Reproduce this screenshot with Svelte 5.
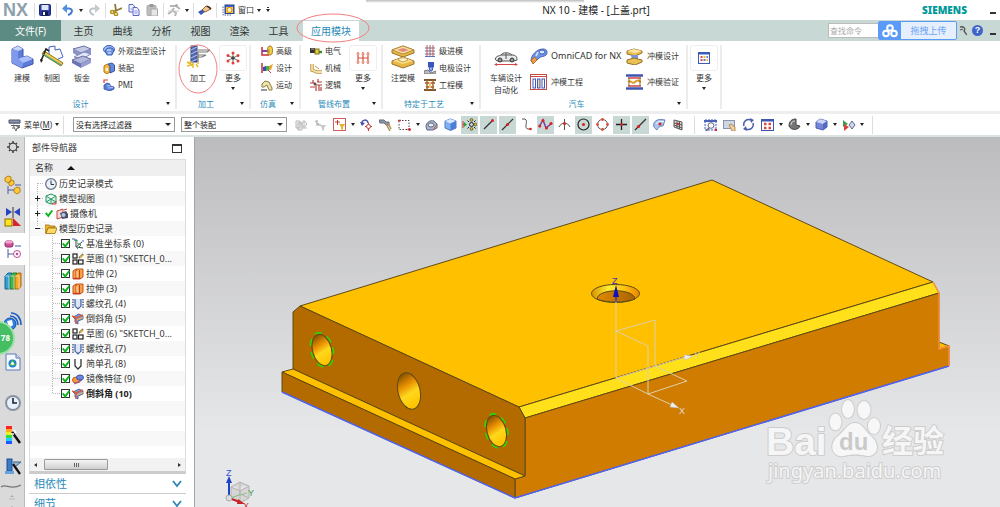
<script>
  const icons = {
    save: [12, 12, '<rect x=".5" y=".5" width="11" height="11" rx="1" fill="#2b3da0" stroke="#1c2a78"/><rect x="2.500" y="1" width="7" height="5" fill="#dfe6fa"/><rect x="3" y="7.500" width="6" height="4" fill="#11184a"/><rect x="4" y="8" width="2" height="3" fill="#fff"/>'],
    undo: [12, 12, '<path d="M2.500 4.500H7C12 5 10 10 6 11" fill="none" stroke="#3f7fd0" stroke-width="2"/><path d="M0 4.500L5 0V9Z" fill="#4f8fdc"/>'],
    redo: [12, 12, '<path d="M9.500 4.500H5C0 5 2 10 6 11" fill="none" stroke="#bcc4cc" stroke-width="2"/><path d="M12 4.500L7 0V9Z" fill="#c3cad2"/>'],
    cut: [12, 12, '<path d="M5 0L6 7M12 4L3 8" stroke="#8c7a3a" stroke-width="1.800"/><ellipse cx="2.500" cy="8" rx="2" ry="1.500" fill="none" stroke="#b3921e" stroke-width="1.500"/><ellipse cx="6" cy="10" rx="1.500" ry="1.800" fill="none" stroke="#b3921e" stroke-width="1.500"/>'],
    copy: [12, 12, '<path d="M1 .500H5L7 3V8H1Z" fill="#eef0ff" stroke="#5a68c4"/><path d="M5 3.500H9L11 6V11.500H5Z" fill="#eef0ff" stroke="#5a68c4"/><path d="M6.500 7H9.500M6.500 9H9.500M2.500 5H4" stroke="#8b95dd"/>'],
    paste: [12, 12, '<rect x="1" y="1.500" width="9" height="10" rx="1" fill="#bdbdbd" stroke="#aaa"/><rect x="3.500" y="0" width="4" height="3" fill="#999"/><rect x="5" y="5" width="6.500" height="7" fill="#e6e6e6" stroke="#aaa"/>'],
    runner: [14, 12, '<path d="M3 2H9L13 5M7 4L4 8L1 10M6 7L9 9L8 12" fill="none" stroke="#b5b5b5" stroke-width="2"/><circle cx="9.500" cy="1.500" r="1.500" fill="#aaa"/><path d="M1 7H12" stroke="#ccc"/>'],
    touch: [14, 12, '<path d="M0 8L5 5L8 7L3 11Z" fill="#3e57b5"/><path d="M4 6L8 2L12 3L13 5L9 7L7 8Z" fill="#f4c68c" stroke="#6b4a25" stroke-width=".8"/><path d="M9 2L13 5" stroke="#3c2a1a" stroke-width="1.500"/>'],
    window: [13, 12, '<path d="M1 2.500V11H10" fill="none" stroke="#55609a" stroke-dasharray="1.500 1"/><rect x="3" y="1" width="9" height="8.500" fill="#3f64c9" stroke="#2a4390"/><rect x="4" y="3" width="7" height="6" fill="#ffc928"/><circle cx="7.500" cy="6" r="2.500" fill="#fff2c0" stroke="#d98c16"/>'],
    model: [24, 24, '<path d="M2 4L8 1L13 4V12L17 11L23 14V19L12 23L2 18Z" fill="#5d7bd8" stroke="#3a53a8"/><path d="M2 4L8 1L13 4L8 6Z" fill="#c6d5fa"/><path d="M8 14L13 12L17 11L23 14L13 18Z" fill="#a9befa"/><path d="M2 4L8 6V14L13 18L12 23L2 18Z" fill="#7f9aea"/>'],
    draft: [24, 24, '<path d="M9 10V2L15 1V5L20 4L23 12L18 14" fill="#fafbff" stroke="#4a62c4"/><path d="M4 6L23 18L21 21L2 9Z" fill="#f0cb4c" stroke="#8c7a1e"/><path d="M1 16L6 4L9 6" fill="none" stroke="#222" stroke-width="1.600"/><path d="M0 14L3 15L1 18Z" fill="#222"/><path d="M3 9L21 20" stroke="#45a08c" stroke-width="1.200"/>'],
    metal: [24, 24, '<path d="M3 4L14 1L21 4L11 8Z" fill="#c5c9e6" stroke="#6870a4"/><path d="M3 4V8L11 13L21 9V4L11 8Z" fill="#8b93c8"/><path d="M4 12L14 7L21 9L12 14Z" fill="#e6e9fa" stroke="#8088b8"/><path d="M2 15L13 11L21 14L11 19Z" fill="#b1b6dc" stroke="#6870a4"/><path d="M2 15V18L11 23V19Z" fill="#6973b6"/><path d="M11 19L21 14V18L11 23Z" fill="#969ed2"/>'],
    shape: [12, 11, '<ellipse cx="6" cy="4.500" rx="5.500" ry="4" fill="#9bb8f4" stroke="#3b62ba"/><path d="M2 6C4 2 9 2 11 5L9 10H4Z" fill="#6f95e4" stroke="#3b62ba"/><path d="M4 5H8M5 8H8" stroke="#e8f0ff"/>'],
    assembly: [12, 12, '<path d="M1 4L4 2L7 4V10L4 12L1 10Z" fill="#f6b83d" stroke="#b5731a"/><path d="M5 2L9 1L11.500 3V9L7 11V4Z" fill="#6289dc" stroke="#3656a4"/><path d="M2.500 6H5V9H2.500Z" fill="#fff2cb"/>'],
    pmi: [12, 12, '<path d="M1 4V1H5" fill="none" stroke="#d13b3b" stroke-width="1.200"/><path d="M1 6L4 4L7 5V7L11 8V10L7 12L1 10Z" fill="#5a7fdb" stroke="#3450a0" stroke-width=".8"/><path d="M4 7L7 6.500M5 9L10 8.500" stroke="#b8ccfa"/>'],
    mill: [24, 24, '<rect x="5" y="1" width="6" height="16" fill="#5468b0" stroke="#33447f"/><path d="M5 5L11 2M5 9L11 6M5 13L11 10M5 17L11 14" stroke="#b9c5ef"/><path d="M12 5H24L21 7H12M12 10H20L16 12H12M12 7V17" fill="none" stroke="#777" stroke-width="1.200"/><path d="M1 17L6 20L1 21M7 18V23M10 19L12 22M11 18L13 18M4 16L5 19" stroke="#e8bb22" stroke-width="1.500" fill="none"/>'],
    more1: [14, 14, '<path d="M7 1V13M1 4L13 10M13 4L1 10" stroke="#777"/><g fill="#e04038"><circle cx="7" cy="2" r="1.500"/><circle cx="2" cy="4.500" r="1.500"/><circle cx="12" cy="4.500" r="1.500"/><circle cx="2" cy="10" r="1.500"/><circle cx="12" cy="10" r="1.500"/><circle cx="7" cy="12" r="1.500"/></g><circle cx="7" cy="7" r="1.800" fill="#444"/>'],
    more2: [14, 14, '<path d="M2 1V13M7 1V13M12 1V13M2 7H12" stroke="#d9503c" stroke-width="1.200"/><path d="M0 3H4M5 3H9M10 3H14M0 11H4M5 11H9M10 11H14" stroke="#e8a898"/>'],
    more3: [12, 12, '<rect x=".5" y=".5" width="11" height="11" fill="#fff" stroke="#4058b8"/><path d="M1 1.500H11" stroke="#4058b8" stroke-width="2"/><path d="M2.500 5H4.500M2.500 8H4.500" stroke="#d84c4c" stroke-width="1.800"/><path d="M5.500 5H7.500M8.500 8H10" stroke="#e8bb30" stroke-width="1.800"/><path d="M8.500 5H10M5.500 8H7.500" stroke="#5e7bd0" stroke-width="1.800"/>'],
    sim: [12, 12, '<path d="M1 2V10H8" fill="none" stroke="#c43131" stroke-width="1.500"/><path d="M1 6H7" stroke="#7f3fb0" stroke-width="2"/><ellipse cx="9" cy="5.500" rx="2.500" ry="4.500" fill="#f5d04c" stroke="#9a7a18"/><path d="M8 4V8" stroke="#a5831c"/>'],
    simd: [12, 12, '<path d="M1 1V11" stroke="#c43131" stroke-width="1.500"/><path d="M2 5L5 4V9H2Z" fill="#3a4fae"/><path d="M5 4H8V8L5 9Z" fill="#3eb060"/><path d="M8 4L12 2L10 8H8Z" fill="#eaa22a"/><path d="M7 8L10 11" stroke="#c43131"/>'],
    motion: [12, 12, '<path d="M1 5L4 2L8 3L11 9V11H8L6 6L3 8H1Z" fill="#f1e3ae" stroke="#8d7b3b"/><path d="M0 11H6" stroke="#777" stroke-width="1.500"/>'],
    elec: [12, 12, '<rect y="3" width="5" height="5" fill="#333"/><rect x="5" y="4" width="4" height="5" fill="#e9cd38" stroke="#80701c"/><path d="M9 7H12" stroke="#3a8a3a" stroke-width="2.500"/><path d="M1 4H4" stroke="#aaa"/>'],
    mech: [12, 12, '<path d="M2 2V8L7 10H12" fill="none" stroke="#b9984a" stroke-width="3.500"/><path d="M2 2V8L7 10H12" fill="none" stroke="#f4dfa6" stroke-width="1.800"/><path d="M5 4L9 7" stroke="#b9984a"/>'],
    logic: [12, 12, '<path d="M0 4H5M0 8H5M7 3H12M5 6H12M3 1V4M8 0V3M9 6V12M6 7V12M11 8V12" stroke="#b4423c" stroke-width="1.200"/><circle cx="5" cy="5" r="1.500" fill="#555"/>'],
    mold: [24, 24, '<path d="M1 5L12 1L23 5V8L12 12L1 8Z" fill="#e7b745" stroke="#9a722a"/><path d="M1 5L12 1L23 5L12 9Z" fill="#fae2a2" stroke="#b88d39"/><path d="M6 5L12 3L18 5L12 7Z" fill="#e48c7c"/><path d="M1 16L12 12L23 16V19L12 23L1 19Z" fill="#e7b745" stroke="#9a722a"/><path d="M2 16L12 12L22 16L12 19Z" fill="#f9db89"/><path d="M7 15C9 12 15 12 17 15L12 17Z" fill="#fff4ca" stroke="#caa14d"/>'],
    prog: [12, 12, '<path d="M1 3H11M1 6H11M1 9H11M1 11.500H11" stroke="#5b73b5" stroke-width="1.200"/><path d="M3 0V11M6 0V11M9 0V11" stroke="#c55a4a" stroke-width="1"/>'],
    electrode: [12, 12, '<rect x="4" y="0" width="6" height="5" fill="#3955bf"/><path d="M5 5H9L8 9H6Z" fill="#9fb2ef" stroke="#3955bf"/><path d="M0 9L4 8L7 11L12 9V12H0Z" fill="#bdbdbd" stroke="#777"/>'],
    engdie: [12, 12, '<path d="M0 1H12M0 11H12" stroke="#82552a" stroke-width="2"/><path d="M1 4H11M2 8H10" stroke="#ba413a" stroke-width="1.500"/><path d="M3 1V11M9 1V11" stroke="#9a7130" stroke-width="1.500"/><rect x="5" y="3" width="2" height="6" fill="#efcc60"/>'],
    car: [24, 16, '<path d="M1 9C2 6 5 6 7 5C9 2 15 2 18 5C21 5 23 6 23 10L20 11H3Z" fill="#e8ecec" stroke="#555"/><path d="M7 5H18M12 3V9" stroke="#555"/><circle cx="6" cy="10" r="2" fill="#999" stroke="#333"/><circle cx="18" cy="10" r="2" fill="#999" stroke="#333"/><path d="M2 14.500H22" stroke="#d64545"/><path d="M0 14.500L3 13V16ZM24 14.500L21 13V16Z" fill="#d64545"/>'],
    omni: [18, 16, '<path d="M1 13C1 7 7 1 13 1C17 1 18 4 16 7C14 9 11 8 9 10L4 15Z" fill="#6f95e6" stroke="#3f5fb2"/><path d="M1 12L5 9L7 12L3 16Z" fill="#eda04a" stroke="#b5702a"/><ellipse cx="12" cy="4" rx="3" ry="2" fill="#d8e4ff" stroke="#3f5fb2"/><path d="M8 4L6 8" stroke="#d8e4ff" stroke-width="1.500"/>'],
    dieeng: [17, 16, '<rect x=".5" y=".5" width="16" height="15" fill="#fff" stroke="#c94a42"/><path d="M1 2.500H16" stroke="#c94a42"/><rect x="3" y="5" width="2.500" height="9" fill="#fff" stroke="#4058b8"/><rect x="7.500" y="5" width="2.500" height="9" fill="#f3d6a0" stroke="#4058b8"/><rect x="12" y="5" width="2.500" height="9" fill="#fff" stroke="#4058b8"/>'],
    diedes: [17, 17, '<path d="M1 3L8 1L16 3V5L9 8L1 6Z" fill="#e9c052" stroke="#94702a"/><path d="M1 3L8 1L16 3L9 5Z" fill="#fbe4a0"/><path d="M5 7L12 7V11L6 12Z" fill="#7c93d8"/><path d="M1 12L8 10L16 12V14L9 17L1 15Z" fill="#e9c052" stroke="#94702a"/>'],
    diever: [17, 16, '<path d="M0 1.500H17M0 14.500H17" stroke="#3f56b0" stroke-width="2.500"/><path d="M2 4H15M2 12H15" stroke="#d0453f" stroke-width="1.500"/><path d="M2 8C5 5 6 11 9 8S13 7 15 8" fill="none" stroke="#e09a28" stroke-width="2"/><path d="M3 4V12M14 4V12" stroke="#8d6a2c"/>'],
    menu: [13, 12, '<path d="M1 1.500H10M1 4H12M3 6.500H12M4 9H11" stroke="#667"/><path d="M1 1V4H12V1Z" fill="#8899b8" stroke="#556"/><path d="M5 6L8 12L9 9L12 8Z" fill="#fff" stroke="#444" stroke-width=".8"/>'],
    f1: [13, 12, '<path d="M1 2H5V9H1ZM3 4H7V11H3Z" fill="#eee" stroke="#b7b7b7"/><circle cx="9" cy="5" r="2.500" fill="none" stroke="#bbb"/><path d="M9 1V9M7 9H12" stroke="#bbb"/>'],
    f2: [13, 12, '<path d="M1 2L5 5M3 1V6H7" fill="none" stroke="#bbb" stroke-width="1.500"/><path d="M6 6H12L10 9V12L8 11V9Z" fill="#c8c8c8"/>'],
    f3: [13, 13, '<rect x=".5" y=".5" width="12" height="12" fill="#fff" stroke="#d06060"/><path d="M2 4H7M4.500 2V7" stroke="#c03a3a"/><path d="M6 6H12L10 9V12L8 11V9Z" fill="#e6b32e"/>'],
    f4: [13, 13, '<path d="M2 6C1 1 8 1 8 5" fill="none" stroke="#3c4ea8" stroke-width="1.500"/><path d="M0 4L5 5L2 8Z" fill="#3c4ea8"/><path d="M5 8.500H12M8.500 5V13" stroke="#c93a3a" stroke-width="1.200"/><circle cx="8.500" cy="8.500" r="2" fill="#fff" stroke="#c93a3a"/>'],
    f5: [13, 12, '<path d="M0 1H5L7 3H10V6H7L5 4H1Z" fill="#8a99ac" stroke="#667"/><path d="M7 5L11 12M9 4L12 10" stroke="#a89058" stroke-width="1.500"/>'],
    f6: [13, 12, '<rect x="1" y="1.500" width="10" height="9" fill="none" stroke="#444" stroke-dasharray="1.500 1.500"/><path d="M0 1.500H3M9.500 10.500H13M11.500 9V12" stroke="#c33" stroke-width="1.500"/>'],
    f7: [13, 12, '<path d="M1 8C1 3 5 1 9 2L12 5V9L8 11H2Z" fill="#aab6cc" stroke="#5f6c86"/><ellipse cx="6" cy="6" rx="3" ry="2" fill="#e9edf5" stroke="#5f6c86"/><path d="M8 11L12 5" stroke="#c05a4a"/>'],
    f8: [13, 13, '<path d="M1 3L6.500 1L12 3V10L6.500 12.500L1 10Z" fill="#7fb0f0" stroke="#5577c8"/><path d="M1 3L6.500 1L12 3L6.500 5.500Z" fill="#d6e7ff"/><path d="M6.500 5.500L12 3V10L6.500 12.500Z" fill="#4d7fd8"/>'],
    s1: [15, 13, '<path d="M1 3V10M1 6.500H4" fill="none" stroke="#c33"/><path d="M2 4L5 6.500L2 9Z" fill="#2aa03a"/><g fill="none" stroke="#222"><circle cx="9.500" cy="6.500" r="2"/><path d="M7 4L5.500 2.500M12 4L13.500 2.500M7 9L5.500 10.500M12 9L13.500 10.500"/></g><g fill="#e8c020" stroke="#333" stroke-width=".6"><circle cx="9.500" cy="2" r="1.400"/><circle cx="13.500" cy="6.500" r="1.400"/><circle cx="9.500" cy="11" r="1.400"/></g>'],
    s2: [13, 13, '<path d="M2 11L10 3" stroke="#333" stroke-width="1.200"/><circle cx="10.500" cy="2.500" r="1.500" fill="#d22"/>'],
    s3: [13, 13, '<path d="M1 12L12 1" stroke="#333" stroke-width="1.200"/><circle cx="6.500" cy="6.500" r="1.600" fill="#d22"/>'],
    s4: [13, 13, '<path d="M2 1H5C9 3 3 10 8 11H11" fill="none" stroke="#555"/><circle cx="10.500" cy="11" r="1.300" fill="#d22"/>'],
    s5: [15, 13, '<path d="M1 9L5 2L8 10L14 5" fill="none" stroke="#7b3fa0" stroke-width="1.500"/><g fill="#d22"><circle cx="1.800" cy="8" r="1.500"/><circle cx="5" cy="2.500" r="1.500"/><circle cx="8.500" cy="10" r="1.500"/><circle cx="13" cy="5.500" r="1.500"/></g>'],
    s6: [13, 13, '<path d="M6.500 1V12M1 9C3 4 10 4 12 9" fill="none" stroke="#555"/><circle cx="6.500" cy="5.500" r="1.500" fill="#d22"/>'],
    s7: [13, 13, '<circle cx="6.500" cy="6.500" r="5.500" fill="none" stroke="#222" stroke-width="1.200"/><circle cx="6.500" cy="6.500" r="1.600" fill="#d22"/>'],
    s8: [13, 13, '<circle cx="6.500" cy="6.500" r="5" fill="none" stroke="#555"/><g fill="#e04a3a"><circle cx="6.500" cy="1.500" r="1.400"/><circle cx="6.500" cy="11.500" r="1.400"/><circle cx="1.500" cy="6.500" r="1.400"/><circle cx="11.500" cy="6.500" r="1.400"/></g>'],
    s9: [13, 13, '<path d="M6.500 1V12M1 6.500H12" stroke="#222" stroke-width="1.300"/><circle cx="6.500" cy="6.500" r="1.300" fill="#d22"/>'],
    s10: [13, 13, '<path d="M1 12L12 1" stroke="#333" stroke-width="1.200"/><circle cx="4.500" cy="8.500" r="1.600" fill="#d22"/>'],
    s11: [13, 13, '<path d="M1 5C3 1 8 1 12 2L10 8C6 8 5 10 4 12C1 10 0 8 1 5Z" fill="#a9c4ee" stroke="#6484bd"/><path d="M3 6C5 3 8 3 11 4" fill="none" stroke="#fff"/><circle cx="7" cy="6" r="1.500" fill="#d22"/>'],
    s12: [11, 13, '<path d="M1 2L9 4V12L1 9ZM1 5L9 7M1 7L9 10M4 3V10M6.500 3V11" fill="#ddd" stroke="#555"/><circle cx="5" cy="6" r="1.200" fill="#d22"/>'],
    v1: [13, 12, '<rect x="1" y="1" width="11" height="10" fill="#eef2fc" stroke="#4a62b8" stroke-dasharray="2 1"/><path d="M0 2H13" stroke="#4a62b8" stroke-width="2"/><circle cx="7" cy="6.500" r="2.800" fill="#fff" stroke="#667"/><path d="M5 9L2 12" stroke="#667" stroke-width="1.500"/><circle cx="12" cy="11" r="1.200" fill="#d22"/>'],
    v2: [13, 12, '<rect x=".5" y="1.500" width="11" height="8" fill="#cfd7e4" stroke="#8894aa"/><path d="M6 6L8 5L12 8V12H9Z" fill="#f3cf9a" stroke="#a5794a" stroke-width=".8"/>'],
    v3: [13, 13, '<path d="M2 8A5 5 0 0 1 9 2M11 5A5 5 0 0 1 4 11" fill="none" stroke="#4a5fa8" stroke-width="1.500"/><path d="M8 0L12 2L9 5ZM5 13L1 11L4 8Z" fill="#4a5fa8"/>'],
    v4: [13, 12, '<rect x=".5" y=".5" width="12" height="11" fill="#fff" stroke="#3f56b0"/><path d="M1 1.500H12" stroke="#3f56b0" stroke-width="2"/><path d="M3 5H5.500M7.500 5H10M3 9H5.500M7.500 9H10" stroke="#d9483f" stroke-width="2.500"/>'],
    v5: [13, 13, '<path d="M1 8C1 3 4 1 8 1V7L12 8C11 12 3 13 1 8Z" fill="#777" stroke="#444"/><path d="M3 7C3 4 5 3 7 3" fill="none" stroke="#ddd"/>'],
    v6: [13, 13, '<path d="M1 4L5 1L12 3V9L8 12L1 10Z" fill="#7386d6" stroke="#4a5cb0"/><path d="M1 4L5 1L12 3L8 6Z" fill="#c9d3f7"/><path d="M8 6L12 3V9L8 12Z" fill="#5468bc"/>'],
    v7: [14, 12, '<path d="M1 1L6 5L1 8Z" fill="#3fa04c"/><path d="M2 5L7 8L2 12Z" fill="#d8453c"/><path d="M7 6L10 2L13 6L10 10Z" fill="#cdd5e6" stroke="#5b6a94"/>'],
    gear: [12, 12, '<circle cx="6" cy="6" r="3.800" fill="none" stroke="#444" stroke-width="1.200"/><path d="M6 0V2M6 10V12M0 6H2M10 6H12M2 2L3.300 3.300M8.700 8.700L10 10M10 2L8.700 3.300M3.300 8.700L2 10" stroke="#444" stroke-width="1.500"/>'],
    rAsm: [18, 20, '<path d="M1 3L4 1L7 2V6L4 8L1 6ZM5 7L8 5L10 6V9L7 11L5 10ZM10 14L13 12L16 13V17L13 19L10 17Z" fill="#ffc83a" stroke="#b5821c"/><path d="M4 11V19M4 15H10M11 10H17" stroke="#4a5aa8" fill="none"/>'],
    rCon: [18, 20, '<path d="M2 1V9L8 5ZM16 1V9L10 5Z" fill="#2743c0"/><path d="M9 0V11" stroke="#333"/><rect x="1" y="12" width="7" height="7" fill="#ffe11f" stroke="#8a7000"/><path d="M9 11L17 19H9Z" fill="#d8242a"/>'],
    rPart: [18, 20, '<rect x="1" y="2" width="8" height="6" rx="2" fill="#cf4f9a" stroke="#8c2a68"/><ellipse cx="5" cy="3" rx="4" ry="1.500" fill="#efa4cc"/><path d="M11 7H17M4 10V19M4 15H9" stroke="#4a5aa8"/><circle cx="13" cy="15" r="3.500" fill="#fff" stroke="#c04a90"/><circle cx="13" cy="15" r="1.300" fill="#c04a90"/>'],
    books: [18, 18, '<path d="M1 4L4 1H8V15L5 17H1Z" fill="#2f9fd6" stroke="#1b6590"/><path d="M6 4L9 1H13V15L10 17H6Z" fill="#3fb54a" stroke="#237a2c"/><path d="M11 4L14 1H17V14L15 17H11Z" fill="#f5a623" stroke="#a86a10"/><path d="M1 4H5V17M6 4H10V17M11 4H15V17" stroke="#fff" stroke-width=".6" fill="none"/>'],
    globe: [18, 18, '<circle cx="6" cy="12" r="6" fill="#2f7fe0" stroke="#1b4fa0"/><path d="M3 9L8 8L9 13L5 16Z" fill="#fff"/><path d="M6 4C11 4 14 8 14 13M7 1C13 1 17 6 17 13" fill="none" stroke="#1d5fc4" stroke-width="1.600"/>'],
    page: [16, 18, '<path d="M1 1H11L15 5V17H1Z" fill="#f4f8ff" stroke="#5a7ab5"/><path d="M11 1V5H15" fill="#cfdcf4" stroke="#5a7ab5"/><circle cx="7.500" cy="10.500" r="4" fill="#1f7fd0"/><path d="M7.500 6.500L11 12.500H4Z" fill="#54b948"/><circle cx="7.500" cy="10.500" r="1.500" fill="#fff"/>'],
    clock: [18, 18, '<circle cx="9" cy="9" r="8" fill="#8d97a6"/><circle cx="9" cy="9" r="6.500" fill="#e6effc" stroke="#7c8694"/><path d="M9 4V9H13" fill="none" stroke="#223" stroke-width="1.600"/>'],
    rainbow: [18, 20, '<rect x="2" y="1" width="6" height="3" fill="#f22"/><rect x="2" y="4" width="6" height="3" fill="#fa2"/><rect x="2" y="7" width="6" height="3" fill="#ee2"/><rect x="2" y="10" width="6" height="3" fill="#3d4"/><rect x="2" y="13" width="6" height="3" fill="#2cf"/><rect x="2" y="16" width="6" height="3" fill="#25f"/><path d="M8 7L16 18" stroke="#111" stroke-width="2.500"/><path d="M10 5L12 8M7 9L10 9" stroke="#fff" stroke-width="1.500"/>'],
    rMill: [18, 18, '<rect x="3" y="1" width="5" height="12" fill="#3b7bc8" stroke="#1f4f90"/><path d="M1 13H10V16H1Z" fill="#6aa2de"/><path d="M9 4H17L12 8" fill="#8fb6e0" stroke="#467"/><path d="M9 6L16 16" stroke="#111" stroke-width="2.200"/>'],
    tClock: [12, 12, '<circle cx="6" cy="6" r="5.300" fill="#e9f1fb" stroke="#6b7686" stroke-width="1.300"/><path d="M6 2.500V6.500H9" fill="none" stroke="#334"/>'],
    tView: [12, 12, '<path d="M1 3L6 1L11 3V9L6 11L1 9ZM1 3L6 6L11 3M6 6V11M1 9L6 6L11 9" fill="#d9f3e4" stroke="#2a9a68"/><path d="M7 11H11V8" fill="none" stroke="#d33"/>'],
    tCam: [12, 12, '<path d="M1 3L7 1V9L1 11Z" fill="#f4dcd8" stroke="#c9453c"/><path d="M4 5L10 3L12 6V10L6 11Z" fill="#4b4f6a"/><circle cx="7.500" cy="7" r="2" fill="#b9c7e4"/><path d="M8 2L11 1" stroke="#c33"/>'],
    tFolder: [12, 12, '<path d="M0 2H4L5 3H10V5H3L1 10H0Z" fill="#f0b429" stroke="#9a6d10" stroke-width=".8"/><path d="M3 5H12L10 10.500H1Z" fill="#ffd867" stroke="#9a6d10" stroke-width=".8"/>'],
    tCsys: [12, 12, '<path d="M4 9V1M4 9L11 10M4 9L10 4" stroke="#444"/><path d="M2 2L6 3M5 5L9 7L5 11" fill="none" stroke="#2d9a6a"/><path d="M0 1L3 1M10 3L12 3" stroke="#36c"/>'],
    tSketch: [12, 12, '<g fill="none" stroke="#222" stroke-width="1.200"><rect x="1" y="1" width="4" height="4"/><rect x="1" y="7" width="4" height="4"/><rect x="6.500" y="7" width="4.500" height="4"/><path d="M11 1L7 5"/></g><path d="M8 3L11 1L12 2L9 5L7 5.500Z" fill="#c9aa48"/>'],
    tExt: [12, 12, '<path d="M1 3L4 1H11V9L8 11H1Z" fill="#f9a245" stroke="#c4541c"/><path d="M4 1V10M7.500 2V11" stroke="#b8481c"/><path d="M5 3V9" stroke="#ffe2b8"/><path d="M1 10.500H9" stroke="#c33"/>'],
    tThread: [12, 12, '<path d="M1 1V10M11 1V10" stroke="#4b659a" stroke-width="1.500" stroke-dasharray="1.500 1"/><path d="M3 1V8L6 11L9 8V1" fill="#b9cbed" stroke="#4b659a" stroke-width="1.200"/><path d="M5 1V9M7 1V9" stroke="#fff"/>'],
    tHole: [12, 12, '<path d="M3 1V8L6 11L9 8V1" fill="#fff" stroke="#333" stroke-width="1.300"/>'],
    tCham: [12, 12, '<path d="M1 4L7 1L11 3V6L6 8V11L3 9V6Z" fill="#7f9be8" stroke="#3450a0" stroke-width=".8"/><path d="M0 3L4 5L11 2M4 5V11" fill="none" stroke="#e25a2a" stroke-width="1.400"/><path d="M5 7L11 4.500" stroke="#f2b53a" stroke-width="1.200"/>'],
    tMirror: [12, 12, '<ellipse cx="4.500" cy="7" rx="4" ry="3" fill="#f59a3d" stroke="#b95a1a"/><ellipse cx="8" cy="4.500" rx="3.500" ry="2.500" fill="#6b86e0" stroke="#3a4fae"/><path d="M2 11L10 7" stroke="#8449b0"/>'],
    cloud: [16, 14, '<g fill="none" stroke="#fff" stroke-width="2"><circle cx="8" cy="4" r="2.800"/><circle cx="4" cy="9.500" r="2.800"/><circle cx="12" cy="9.500" r="2.800"/></g>'],
    wrench: [8, 10, '<path d="M1 1C5 0 7 3 5 5L8 9M1 4L4 3" fill="none" stroke="#555" stroke-width="1.300"/>']
  };

  const titleTools = ['|', 'save', '|', 'undo', 'v', 'redo', '|', 'cut', 'copy', 'paste', '|', 'runner', 'v', '|', 'touch', '|'];
  const tabs = ['主页', '曲线', '分析', '视图', '渲染', '工具'];
  const groups = [
    { name: '设计', w: 177, pad: 7, big: [['model', '建模'], ['draft', '制图'], ['metal', '钣金']], small: [['shape', '外观造型设计'], ['assembly', '装配'], ['pmi', 'PMI']] },
    { name: '加工', w: 74, pad: 6, big: [['mill', '加工']], ring: true, more: 'more1' },
    { name: '仿真', w: 50, pad: 4, small: [['sim', '高级'], ['simd', '设计'], ['motion', '运动']] },
    { name: '管线布置', w: 82, pad: 3, small: [['elec', '电气'], ['mech', '机械'], ['logic', '逻辑']], more: 'more2' },
    { name: '特定于工艺', w: 98, pad: 5, big: [['mold', '注塑模']], small: [['prog', '级进模'], ['electrode', '电极设计'], ['engdie', '工程模']] },
    { name: '汽车', w: 207, pad: 7, auto: true },
    { w: 34, pad: 2, more: 'more3' }
  ];
  const snaps = ['f1', 'f2', 'f3', 'v', 'f4', 'f5', 'f6', 'v', 'f7', 'f8', '*s1', '*s2', '*s3', 's4', '*s5', 's6', '*s7', 's8', '*s9', '*s10', 's11', 's12', '|', 'v1', 'v2', 'v3', 'v4', 'v', 'v5', 'v', 'v6', 'v', 'v7', 'v', '|'];
  const top = [
    ['tClock', '历史记录模式', ''],
    ['tView', '模型视图', '+'],
    ['tCam', '摄像机', '+'],
    ['tFolder', '模型历史记录', '-']
  ];
  const features = [
    ['tCsys', '基准坐标系 (0)'],
    ['tSketch', '草图 (1) "SKETCH_0...'],
    ['tExt', '拉伸 (2)'],
    ['tExt', '拉伸 (3)'],
    ['tThread', '螺纹孔 (4)'],
    ['tCham', '倒斜角 (5)'],
    ['tSketch', '草图 (6) "SKETCH_0...'],
    ['tThread', '螺纹孔 (7)'],
    ['tHole', '简单孔 (8)'],
    ['tMirror', '镜像特征 (9)'],
    ['tCham', '倒斜角 (10)']
  ];
  const resources = ['rAsm', 'rCon', 'rPart', 'books', 'globe', 'page', 'clock', 'rainbow', 'rMill'];
</script>

{#snippet icon(name)}
  <svg class="icon" width={icons[name][0]} height={icons[name][1]} viewBox="0 0 {icons[name][0]} {icons[name][1]}" aria-hidden="true">{@html icons[name][2]}</svg>
{/snippet}

{#snippet more(name)}
  <button class="more">
    <span class="box">{@render icon(name)}</span>
    <span class="lbl">更多</span>
    <i class="caret"></i>
  </button>
{/snippet}

<div class="app">
  <header class="title">
    <div class="quick">
      <b class="nx">NX</b>
      {#each titleTools as t}
        {#if t === '|'}<i class="sep"></i>
        {:else if t === 'v'}<i class="drop"><i class="caret"></i></i>
        {:else}<button class="tool" aria-label={t}>{@render icon(t)}</button>{/if}
      {/each}
      <button class="win">{@render icon('window')}窗口<i class="caret"></i></button>
      <i class="caret bar"></i>
    </div>
    <h1>NX 10 - 建模 - [上盖.prt]</h1>
    <div class="brand"><b>SIEMENS</b><button class="min" aria-label="minimize"></button></div>
  </header>

  <nav class="tabs">
    <button class="file">文件(F)</button>
    {#each tabs as t}<button class="tab">{t}</button>{/each}
    <button class="tab on">应用模块<svg class="ring tabring" viewBox="0 0 74 30"><ellipse cx="37" cy="15" rx="36" ry="14" /></svg></button>
    <div class="search">
      <input aria-label="search" placeholder="查找命令" />
      <button class="upload"><span class="cl">{@render icon('cloud')}</span><span class="up">拖拽上传</span></button>
      {@render icon('wrench')}
      <button class="help" aria-label="help">?</button>
      <button class="min" aria-label="minimize ribbon"></button>
    </div>
  </nav>

  <section class="ribbon">
    {#each groups as g}
      <div class="group" style="width:{g.w}px">
        <div class="body" style="padding-left:{g.pad}px">
          {#if g.big}
            {#each g.big as [ic, label]}
              <button class="big">{@render icon(ic)}<span class="lbl">{label}</span>
                {#if g.ring}<svg class="ring bigring" viewBox="0 0 40 50"><ellipse cx="20" cy="25" rx="19" ry="24" /></svg>{/if}
              </button>
            {/each}
          {/if}
          {#if g.small}
            <div class="smalls">
              {#each g.small as [ic, label]}<button class="small">{@render icon(ic)}{label}</button>{/each}
            </div>
          {/if}
          {#if g.auto}
            <button class="big car">{@render icon('car')}<span class="lbl">车辆设计<br />自动化</span></button>
            <div class="pair">
              <button class="small"><span class="slot">{@render icon('omni')}</span><span class="latin">OmniCAD for NX</span></button>
              <button class="small"><span class="slot">{@render icon('dieeng')}</span>冲模工程</button>
            </div>
            <div class="pair">
              <button class="small"><span class="slot">{@render icon('diedes')}</span>冲模设计</button>
              <button class="small"><span class="slot">{@render icon('diever')}</span>冲模验证</button>
            </div>
          {/if}
          {#if g.more}{@render more(g.more)}{/if}
        </div>
        {#if g.name}<div class="foot"><span>{g.name}</span><i class="caret"></i></div>{/if}
      </div>
    {/each}
  </section>

  <section class="bar2">
    <button class="menu">{@render icon('menu')}<span>菜单(<u>M</u>)</span><i class="caret"></i></button>
    <i class="sep"></i>
    <span class="sel"><select aria-label="filter"><option>没有选择过滤器</option></select><i class="caret"></i></span>
    <span class="sel wide"><select aria-label="scope"><option>整个装配</option></select><i class="caret"></i></span>
    {#each snaps as s}
      {#if s === '|'}<i class="sep gap"></i>
      {:else if s === 'v'}<i class="drop"><i class="caret"></i></i>
      {:else}<button class="snap" class:on={s[0] === '*'} aria-label={s.replace('*', '')}>{@render icon(s.replace('*', ''))}</button>{/if}
    {/each}
  </section>

  <main>
    <aside class="res">
      <button class="gearb" aria-label="options">{@render icon('gear')}</button>
      {#each resources as r}<button class:on={r === 'rPart'} aria-label={r}>{@render icon(r)}</button>{/each}
      <svg class="wave" width="22" height="28" viewBox="0 0 22 28" aria-hidden="true"><path d="M1 4C6 0 10 8 21 2" fill="none" stroke="#777" stroke-width="1.300" /><path d="M10 14L12 12L14 14ZM10 25L12 23L14 25Z" fill="#aaa" /><path d="M9 16H15" stroke="#bbb" /></svg>
      <span class="badge">78</span>
    </aside>

    <section class="nav">
      <div class="navhead">部件导航器<button class="max" aria-label="maximize"></button></div>
      <div class="tree">
        <div class="colhead">名称<i class="tri"></i></div>
        <ul>
          {#each top as [ic, label, ex], i}
            <li>
              <svg class="stem" width="15" height="15" viewBox="0 0 15 15" aria-hidden="true">
                <path d={i === 0 ? 'M7.5 7V15' : i === 3 ? 'M7.5 0V7' : 'M7.5 0V15'} /><path d="M8 7.5H14" />
                {#if ex}<rect x="5" y="5" width="5" height="5" fill="#fff" /><path class="sign" d={ex === '+' ? 'M5 7.5H10M7.5 5V10' : 'M5 7.5H10'} />{/if}
              </svg>
              {#if ic === 'tCam'}<i class="tick"></i>{/if}
              {@render icon(ic)}<span>{label}</span>
            </li>
          {/each}
          {#each features as [ic, label], i}
            <li class="leaf">
              <svg class="stem" width="9" height="15" viewBox="0 0 9 15" aria-hidden="true"><path d={i === 10 ? 'M.5 0V7' : 'M.5 0V15'} /><path d="M1 7.500H8" /></svg>
              <label class:strong={i === 10}><input type="checkbox" checked />{@render icon(ic)}<span>{label}</span></label>
            </li>
          {/each}
          <li></li><li></li><li></li><li></li>
        </ul>
        <div class="scroll"><i class="al"></i><span class="thumb"><i></i><i></i><i></i></span><i class="ar"></i></div>
      </div>
      {#each ['相依性', '细节'] as p}
        <button class="panel">{p}<svg width="10" height="8" viewBox="0 0 10 8" aria-hidden="true"><path d="M1 1L5 6L9 1" fill="none" stroke="#2f86b5" stroke-width="1.800" /></svg></button>
      {/each}
    </section>

    <section class="view">
      <svg viewBox="195 137 805 370" preserveAspectRatio="xMidYMid meet" role="img" aria-label="上盖">
        <defs>
          <linearGradient id="bore" x1="0" y1="0" x2=".2" y2="1"><stop offset="0" stop-color="#6b3f00" /><stop offset=".4" stop-color="#e88f00" /><stop offset=".65" stop-color="#ffd81c" /><stop offset="1" stop-color="#ffc400" /></linearGradient>
          <linearGradient id="sink"><stop offset="0" stop-color="#d99000" /><stop offset=".35" stop-color="#ffee30" /><stop offset=".7" stop-color="#ffc010" /><stop offset="1" stop-color="#e88400" /></linearGradient>
          <linearGradient id="deep"><stop offset="0" stop-color="#e08a00" /><stop offset="1" stop-color="#a86200" /></linearGradient>
        </defs>
        <g stroke="#5e4a18" stroke-linejoin="round">
          <path d="M300 306L712 180L933 282L519 407Z" fill="#ffc000" />
          <path d="M519 407L933 282L939 293L525 418Z" fill="#ffe01a" />
          <path d="M939 342L949 346L939 349Z" fill="#ffc000" />
          <path d="M525 418L939 293V349L949 346V366L515 498V479L525 476Z" fill="#d07c00" />
          <path d="M293 312L300 306L519 407L525 418V476L293 369Z" fill="#b36b00" />
          <path d="M282 372L293 369L525 476L515 479Z" fill="#ffc000" />
          <path d="M282 372L515 479V498L282 392Z" fill="#b36b00" />
          <ellipse cx="322" cy="350" rx="9.500" ry="16" transform="rotate(-15 322 350)" fill="url(#bore)" />
          <ellipse cx="409" cy="391" rx="11" ry="18.500" transform="rotate(-14 409 391)" fill="url(#bore)" />
          <ellipse cx="496.500" cy="431" rx="9.500" ry="16" transform="rotate(-15 496.500 431)" fill="url(#bore)" />
          <ellipse cx="615.500" cy="293.500" rx="24" ry="9" fill="url(#sink)" />
          <path d="M597 299C598 288 634 288 635 299C626 303 606 303 597 299Z" fill="url(#deep)" />
        </g>
        <g fill="none" stroke="#1fe000" stroke-width="1.500" stroke-dasharray="7 6">
          <ellipse cx="322" cy="350" rx="11" ry="17.500" transform="rotate(-15 322 350)" />
          <ellipse cx="496.500" cy="431" rx="11" ry="17.500" transform="rotate(-15 496.500 431)" />
        </g>
        <path d="M282 392L515 498L949 366" fill="none" stroke="#4f63f5" stroke-width="1.500" />
        <path d="M933 282L939 293V349L949 346V366" fill="none" stroke="#ff9440" stroke-width="1.500" />
        <path d="M616 300V378L648 394L672 405M616 331L655 320V366L687 381L648 394V346L616 331M616 378L655 366L685 357" fill="none" stroke="#dcd0a8" />
        <path d="M684 355L693 356L685 360ZM672 402L679 408L670 407Z" fill="#eee" stroke="#bbb" stroke-width=".5" />
        <path d="M616 285L619 297H613Z" fill="#1010c0" /><path d="M616 296V302" stroke="#1010c0" />
        <g class="ax"><text x="612" y="284" fill="#3a30b8">Z</text><text x="694" y="358" fill="#ddcfa0">Y</text><text x="679" y="414" fill="#ddd">X</text></g>
        <g>
          <path d="M231 487L240 482L249 486V498L240 503L231 499ZM231 487L240 491L249 486M240 491V503M240 482V494L231 499M240 494L249 498" fill="#cfcfcf" fill-opacity=".7" stroke="#b4b4b4" />
          <path d="M229 498V480" stroke="#1c44c8" stroke-width="2" /><path d="M229 476L232 483H226Z" fill="#1c44c8" />
          <path d="M229 498L240 502" stroke="#c22" stroke-width="2" /><path d="M238 499L245 504L237 504Z" fill="#c22" />
          <path d="M229 498L247 493" stroke="#8cc48c" /><circle cx="229" cy="498" r="3" fill="#ddd" stroke="#aaa" />
        </g>
        <g class="ax"><text x="226" y="476" fill="#2a50e0">Z</text><text x="248" y="496" fill="#3a9a4a">Y</text><text x="243" y="509" fill="#c33">X</text></g>
        <g class="mark">
          <text x="766" y="455" class="bai">Bai</text>
          <ellipse cx="835.500" cy="422" rx="6" ry="8.500" /><ellipse cx="848" cy="409" rx="6" ry="9" /><ellipse cx="864" cy="410" rx="6.500" ry="9" /><ellipse cx="874" cy="426" rx="6" ry="8" />
          <path d="M855 423C863 423 864 430 870 435C882 445 877 457 867 456C858 454 852 454 844 456C832 458 828 444 838 436C845 431 847 423 855 423Z" />
          <text x="839" y="450" class="du">du</text>
          <text x="882" y="452" class="jy">经验</text>
          <text x="768" y="478" class="url">jingyan.baidu.com</text>
        </g>
      </svg>
    </section>
  </main>
</div>

<style>
  :global(body) { margin: 0; }
  * { box-sizing: border-box; }
  .app { height: 100vh; display: flex; flex-direction: column; overflow: hidden; background: #fff; color: #333; font: 8px/12px "Noto Sans", "Noto Sans CJK SC", sans-serif; }
  button { border: 0; padding: 0; background: none; font: inherit; color: inherit; white-space: nowrap; }
  .icon { display: block; flex: none; }
  .caret { display: inline-block; flex: none; width: 0; height: 0; border: 2px solid transparent; border-top: 3px solid #222; border-bottom: 0; }
  .sep { flex: none; width: 1px; height: 15px; background: #ddd; }

  .title { display: grid; grid-template-columns: 270px 1fr 78px; align-items: center; height: 20px; flex: none; background: linear-gradient(#bbb, #fff) no-repeat 366px 0 / 218px 3px; }
  .quick { display: flex; align-items: center; height: 20px; padding-left: 3px; }
  .nx { width: 29px; font: bold 18px/20px "Liberation Sans", sans-serif; color: #8da1aa; }
  .tool { width: 18px; display: flex; justify-content: center; }
  .quick .sep { margin: 0 2px; }
  .drop { width: 8px; flex: none; display: flex; justify-content: center; }
  .win { display: flex; align-items: center; gap: 3px; margin: 0 5px 0 3px; }
  .bar { border-top-width: 3px; box-shadow: 0 -3px 0 -1px #333; }
  h1 { margin: 0; text-align: center; font: 10px/20px "Noto Sans", "Noto Sans CJK SC", sans-serif; color: #222; }
  .brand { display: flex; justify-content: space-between; align-items: center; padding-right: 4px; }
  .brand b { font: 900 10px/20px "Noto Sans", "Liberation Sans", sans-serif; color: #099; }
  .min { width: 6px; height: 8px; border-bottom: 2px solid #333; }

  .tabs { display: flex; height: 21px; flex: none; background: #c7d8d5; font-size: 10px; line-height: 20px; }
  .file { width: 61px; margin-right: 3px; background: #5c8b83; color: #fff; }
  .tab { width: 39px; }
  .tab.on { position: relative; width: 56px; margin: 1px 0 0 5px; background: #fff; color: #2a8ab8; }
  .ring { position: absolute; fill: none; stroke: #f08080; pointer-events: none; }
  .tabring { width: 74px; height: 30px; left: -7px; top: -8px; z-index: 2; }
  .search { display: flex; align-items: center; margin-left: auto; padding-right: 4px; }
  .search input { width: 50px; height: 15px; border: 1px solid #bbb; border-right: 0; padding: 0 1px; font: inherit; font-size: 8px; background: #fff; }
  .search input::placeholder { color: #aaa; }
  .upload { display: flex; width: 79px; height: 19px; margin-right: 2px; border: 1px solid #5b9bf8; border-radius: 2px; background: #e6effe; color: #6fa3f5; font-size: 9px; line-height: 17px; }
  .cl { width: 22px; height: 17px; display: grid; place-items: center; background: #5b9bf8; }
  .up { flex: 1; }
  .help { width: 11px; height: 11px; margin: 0 7px 0 5px; border-radius: 50%; background: #3f64c9; color: #fff; font: bold 9px/11px "Liberation Sans", sans-serif; }

  .ribbon { display: flex; flex: none; height: 73px; padding-top: 1px; border-bottom: 3px solid #eee; }
  .group { display: flex; flex-direction: column; flex: none; background: linear-gradient(#ececec, #ececec) no-repeat right 3px / 2px 64px; }
  .body { display: flex; height: 54px; }
  .big { position: relative; display: flex; flex-direction: column; align-items: center; flex: none; width: 30px; padding-top: 3px; gap: 3px; }
  .big .lbl { line-height: 12px; }
  .car { width: 36px; padding-top: 8px; gap: 6px; margin-right: 6px; justify-content: flex-start; }
  .bigring { width: 40px; height: 50px; left: -5px; top: 2px; }
  .smalls { display: flex; flex-direction: column; margin-left: 6px; }
  .small { display: flex; align-items: center; gap: 3px; height: 17px; }
  .pair { display: flex; flex-direction: column; flex: none; width: 96px; padding-top: 1px; }
  .pair .small { height: 26px; }
  .slot { width: 18px; flex: none; }
  .latin { font-size: 9px; }
  .more { display: flex; flex-direction: column; align-items: center; flex: none; width: 28px; margin: 3px 0 0 6px; }
  .smalls + .more { margin-left: 8px; }
  .group:last-child .more { margin-left: 0; }
  .box { display: grid; place-items: center; width: 28px; height: 26px; border: 1px solid #eee; border-radius: 3px; margin-bottom: 1px; }
  .more .caret { margin-top: 3px; }
  .foot { display: flex; align-items: center; height: 15px; padding-right: 7px; color: #2a8ab8; }
  .foot span { flex: 1; text-align: center; padding-right: 5px; }

  .bar2 { display: flex; align-items: center; flex: none; height: 23px; padding-left: 8px; border-bottom: 2px solid #dce4e2; }
  .menu { display: flex; align-items: center; gap: 3px; margin-right: 4px; }
  .bar2 .sep { height: 18px; }
  .sel { position: relative; width: 102px; margin-left: 9px; flex: none; }
  .sel.wide { width: 106px; margin: 0 5px 0 6px; }
  .sel select { appearance: none; display: block; width: 100%; height: 15px; border: 1px solid #999; border-radius: 0; background: #fff; padding: 0 2px; font: inherit; line-height: 12px; color: #222; }
  .sel .caret { position: absolute; right: 4px; top: 6px; border-width: 3px 3px 0; }
  .snap { display: grid; place-items: center; flex: none; width: 17px; height: 18px; margin: 0 1px; }
  .snap.on { background: #c7d8d5; }
  .bar2 .gap { margin: 0 6px; }

  main { display: flex; flex: 1; min-height: 0; }
  .res { position: relative; display: flex; flex-direction: column; width: 25px; flex: none; background: #dadada; border-right: 1px solid #bbb; }
  .res button { display: grid; place-items: center; height: 32px; width: 25px; flex: none; }
  .res .gearb { height: 20px; margin-bottom: 12px; }
  .res button:nth-of-type(6) { margin-top: 8px; }
  .res button:nth-of-type(7), .res button:nth-of-type(8) { margin-top: 9px; }
  .res .on { background: #fff; }
  .wave { flex: none; }
  .badge { position: absolute; left: -18px; top: 184px; width: 33px; height: 34px; border-radius: 50%; border: 2px solid #9be0a8; background: #46bf62; color: #fff; font-size: 8px; font-weight: bold; line-height: 30px; text-align: right; padding-right: 3px; }

  .nav { display: flex; flex-direction: column; width: 169px; flex: none; padding: 0 8px 0 4px; background: #fff; }
  .navhead { display: flex; justify-content: space-between; align-items: center; flex: none; height: 22px; padding: 0 4px 0 3px; font-size: 9px; }
  .max { width: 10px; height: 9px; border: 1px solid #333; border-top-width: 2px; }
  .tree { flex: none; border: 1px solid #ddd; border-width: 1px 1px 3px; border-bottom-color: #ccc; font-size: 9px; }
  .colhead { display: flex; align-items: center; gap: 14px; height: 16px; padding-left: 5px; background: #efefef; }
  .tri { border: 4px solid transparent; border-top: 0; border-bottom: 4px solid #111; }
  ul { height: 282px; margin: 0; padding: 0; list-style: none; overflow: hidden; }
  li { display: flex; align-items: center; height: 15px; white-space: nowrap; }
  li:nth-child(even) { background: #f8f8f8; }
  li .icon { margin-right: 2px; }
  li.leaf { padding-left: 22px; }
  .stem { flex: none; stroke: #bbb; stroke-dasharray: 1 1; }
  .stem rect { stroke: none; }
  .stem .sign { stroke: #222; stroke-dasharray: none; }
  li label { display: flex; align-items: center; }
  li input { appearance: none; display: grid; place-items: center; width: 9px; height: 9px; margin: 0 2px 0 0; border: 1px solid #333; background: #fff; }
  .tick { width: 9px; margin-right: 2px; }
  .tick::before, li input:checked::before { content: ""; display: block; width: 8px; height: 8px; background: #0db520; clip-path: polygon(0 50%, 18% 34%, 40% 58%, 84% 4%, 100% 20%, 42% 100%); }
  .strong { font-weight: bold; color: #222; }
  .scroll { display: flex; align-items: center; height: 13px; padding: 0 4px; background: #f2f2f2; }
  .al, .ar { border: 2px solid transparent; }
  .al { border-right: 3px solid #333; border-left: 0; }
  .ar { border-left: 3px solid #333; border-right: 0; margin-left: auto; }
  .thumb { display: flex; justify-content: center; align-items: center; gap: 1px; width: 64px; height: 11px; margin-left: 7px; border: 1px solid #999; border-radius: 1px; background: linear-gradient(#f4f4f4, #cfcfcf); }
  .thumb i { width: 1px; height: 4px; background: #666; }
  .panel { display: flex; justify-content: space-between; align-items: center; flex: none; height: 20px; padding: 0 4px 0 5px; border-bottom: 1px solid #ccc; color: #2a8ab8; font-size: 11px; }

  .view { flex: 1; min-width: 0; border-left: 1px solid #a5a5a5; background: linear-gradient(#bcbcbe, #e6e7e9 80%); overflow: hidden; }
  .view svg { display: block; width: 100%; height: 100%; }
  .ax { font: 9px "Liberation Sans", sans-serif; }
  .mark { fill: #f8f8f8; fill-opacity: .95; stroke: #cdcdcd; stroke-width: 2; stroke-linejoin: round; paint-order: stroke; font-family: "Noto Sans", "Noto Sans CJK SC", sans-serif; }
  .bai { font: bold 39px "Liberation Sans", sans-serif; }
  .du { font: bold 24px "Liberation Sans", sans-serif; fill: #c8c8c8; stroke: none; }
  .jy { font-size: 31px; font-weight: bold; }
  .url { font-size: 20px; }
</style>
